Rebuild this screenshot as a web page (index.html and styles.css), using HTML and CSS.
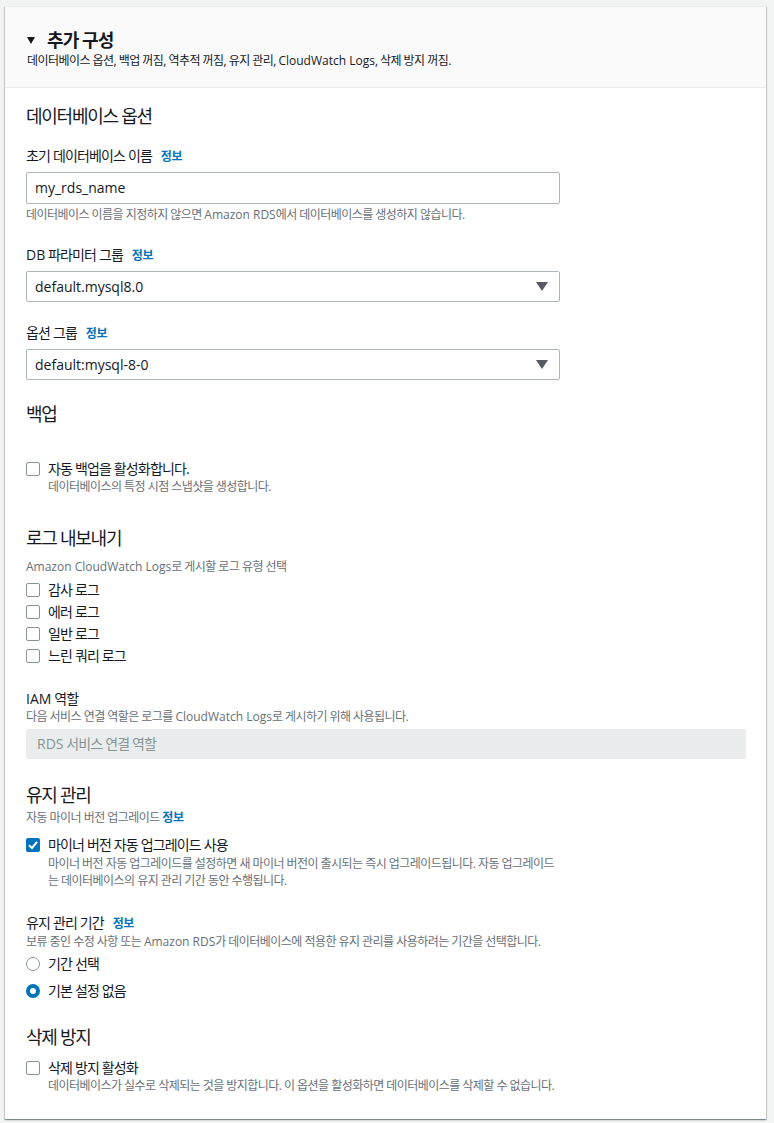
FILE: index.html
```html
<!DOCTYPE html>
<html lang="ko">
<head>
  <meta charset="utf-8">
  <title>추가 구성</title>
  <link rel="stylesheet" href="styles.css">
</head>
<body>
  <div class="card">
    <div class="card-header">
      <h2 class="card-title"><span class="caret"></span>추가 구성</h2>
      <p class="header-desc">데이터베이스 옵션, 백업 꺼짐, 역추적 꺼짐, 유지 관리, <span class="en">CloudWatch Logs</span>, 삭제 방지 꺼짐.</p>
    </div>

    <div class="card-body">
      <!-- 데이터베이스 옵션 -->
      <h3 class="sec-title">데이터베이스 옵션</h3>

      <div class="field mt19">
        <div class="label">초기 데이터베이스 이름 <a class="info">정보</a></div>
        <div class="control"><span class="en">my_rds_name</span></div>
        <p class="hint mt3">데이터베이스 이름을 지정하지 않으면 <span class="en">Amazon RDS</span>에서 데이터베이스를 생성하지 않습니다.</p>
      </div>

      <div class="field mt22">
        <div class="label"><span class="en">DB</span> 파라미터 그룹 <a class="info">정보</a></div>
        <div class="control select"><span class="en">default.mysql8.0</span><span class="arrow"></span></div>
      </div>

      <div class="field mt21">
        <div class="label">옵션 그룹 <a class="info">정보</a></div>
        <div class="control select"><span class="en">default:mysql-8-0</span><span class="arrow"></span></div>
      </div>

      <!-- 백업 -->
      <h3 class="sec-title mt23">백업</h3>
      <div class="check mt34">
        <span class="cb"></span>
        <span class="check-label">자동 백업을 활성화합니다.</span>
      </div>
      <p class="hint indent">데이터베이스의 특정 시점 스냅샷을 생성합니다.</p>

      <!-- 로그 내보내기 -->
      <h3 class="sec-title mt32">로그 내보내기</h3>
      <p class="hint mt10"><span class="en">Amazon CloudWatch Logs</span>로 게시할 로그 유형 선택</p>
      <div class="check-list">
        <div class="check"><span class="cb"></span><span class="check-label">감사 로그</span></div>
        <div class="check"><span class="cb"></span><span class="check-label">에러 로그</span></div>
        <div class="check"><span class="cb"></span><span class="check-label">일반 로그</span></div>
        <div class="check"><span class="cb"></span><span class="check-label">느린 쿼리 로그</span></div>
      </div>

      <div class="field mt23">
        <div class="label"><span class="en">IAM</span> 역할</div>
        <p class="hint">다음 서비스 연결 역할은 로그를 <span class="en">CloudWatch Logs</span>로 게시하기 위해 사용됩니다.</p>
        <div class="control disabled"><span class="en">RDS</span>&nbsp;서비스 연결 역할</div>
      </div>

      <!-- 유지 관리 -->
      <h3 class="sec-title mt25">유지 관리</h3>
      <p class="hint mt4">자동 마이너 버전 업그레이드 <a class="info plain">정보</a></p>
      <div class="check mt9">
        <span class="cb checked">
          <svg viewBox="0 0 14 14" width="14" height="14"><path d="M3 7.2 L6 10 L11 3.8" fill="none" stroke="#fff" stroke-width="2"/></svg>
        </span>
        <span class="check-label">마이너 버전 자동 업그레이드 사용</span>
      </div>
      <p class="hint indent long">마이너 버전 자동 업그레이드를 설정하면 새 마이너 버전이 출시되는 즉시 업그레이드됩니다. 자동 업그레이드<br>는 데이터베이스의 유지 관리 기간 동안 수행됩니다.</p>

      <div class="field mt24">
        <div class="label">유지 관리 기간 <a class="info">정보</a></div>
        <p class="hint">보류 중인 수정 사항 또는 <span class="en">Amazon RDS</span>가 데이터베이스에 적용한 유지 관리를 사용하려는 기간을 선택합니다.</p>
        <div class="radio-list">
          <div class="check"><span class="radio"></span><span class="check-label">기간 선택</span></div>
          <div class="check"><span class="radio on"></span><span class="check-label">기본 설정 없음</span></div>
        </div>
      </div>

      <!-- 삭제 방지 -->
      <h3 class="sec-title mt25">삭제 방지</h3>
      <div class="check mt10">
        <span class="cb"></span>
        <span class="check-label">삭제 방지 활성화</span>
      </div>
      <p class="hint indent">데이터베이스가 실수로 삭제되는 것을 방지합니다. 이 옵션을 활성화하면 데이터베이스를 삭제할 수 없습니다.</p>
    </div>
  </div>
</body>
</html>
```

FILE: styles.css
```css
body {
  margin: 0;
  padding: 6px 8px 6px 5px;
  background-color: #f2f3f3;
  font-family: "Open Sans", "Noto Sans CJK KR", sans-serif;
  font-size: 14px;
  line-height: 20px;
  color: #16191f;
  letter-spacing: -0.06em;
}
.en {
  letter-spacing: 0;
}

/* 카드 */
.card {
  background-color: #ffffff;
  box-shadow: 0 1px 1px 0 rgba(0, 28, 36, 0.3), 1px 1px 1px 0 rgba(0, 28, 36, 0.15), -1px 1px 1px 0 rgba(0, 28, 36, 0.15);
  border-top: 1px solid #eaeded;
}
.card-header {
  background-color: #fafafa;
  border-bottom: 1px solid #eaeded;
  padding: 23px 20px 18px 22px;
}
.card-title {
  margin: 0;
  font-size: 18px;
  line-height: 20px;
  font-weight: 700;
  letter-spacing: -0.05em;
  display: flex;
  align-items: center;
}
.caret {
  width: 0;
  height: 0;
  border-left: 4px solid transparent;
  border-right: 4px solid transparent;
  border-top: 7px solid #16191f;
  margin-right: 12px;
}
.header-desc {
  margin: 3px 0 0;
  font-size: 12px;
  line-height: 16px;
  letter-spacing: -0.045em;
}
.card-body {
  padding: 17px 20px 25px 21px;
}

/* 섹션 */
.sec-title {
  margin: 0;
  font-size: 18px;
  line-height: 22px;
  font-weight: 400;
  letter-spacing: -0.07em;
}
.label {
  font-size: 14px;
  line-height: 20px;
}
.info {
  font-size: 12px;
  font-weight: 700;
  color: #0073bb;
  letter-spacing: -0.03em;
  margin-left: 6px;
}
.info.plain {
  margin-left: 0;
}
.hint {
  margin: 0;
  font-size: 12px;
  line-height: 16px;
  color: #687078;
  letter-spacing: -0.045em;
}
.hint.indent {
  padding-left: 22px;
}
.hint.long {
  line-height: 17px;
}

/* 입력 */
.control {
  position: relative;
  box-sizing: border-box;
  max-width: 534px;
  height: 32px;
  margin-top: 5px;
  border: 1px solid #aab7b8;
  border-radius: 2px;
  padding: 0 8px;
  display: flex;
  align-items: center;
}
.control.select {
  height: 31px;
}
.select .arrow {
  position: absolute;
  right: 11px;
  top: 10px;
  width: 0;
  height: 0;
  border-left: 6px solid transparent;
  border-right: 6px solid transparent;
  border-top: 9px solid #545b64;
}
.control.disabled {
  max-width: none;
  height: 30px;
  margin-top: 4px;
  background-color: #eaeded;
  border-color: #eaeded;
  color: #879596;
  padding: 0 10px;
}

/* 체크박스 / 라디오 */
.check {
  display: flex;
  align-items: flex-start;
}
.cb, .radio {
  flex: none;
  width: 12px;
  height: 12px;
  margin: 3px 8px 0 0;
  border: 1px solid #879596;
  border-radius: 2px;
  background: #ffffff;
}
.cb.checked {
  width: 14px;
  height: 14px;
  border: none;
  background: #0073bb;
}
.cb svg {
  display: block;
}
.radio {
  border-radius: 50%;
}
.radio.on {
  width: 6px;
  height: 6px;
  border: 4px solid #0073bb;
}
.check-label {
  font-size: 14px;
  line-height: 20px;
}
.check-list {
  margin-top: 5px;
  display: flex;
  flex-direction: column;
  gap: 2px;
}
.radio-list {
  margin-top: 4px;
  display: flex;
  flex-direction: column;
  gap: 7px;
}

/* 간격 */
.mt3 { margin-top: 3px; }
.mt4 { margin-top: 4px; }
.mt9 { margin-top: 9px; }
.mt10 { margin-top: 10px; }
.mt19 { margin-top: 19px; }
.mt21 { margin-top: 21px; }
.mt22 { margin-top: 22px; }
.mt23 { margin-top: 23px; }
.mt24 { margin-top: 24px; }
.mt25 { margin-top: 25px; }
.mt32 { margin-top: 32px; }
.mt34 { margin-top: 34px; }
```
